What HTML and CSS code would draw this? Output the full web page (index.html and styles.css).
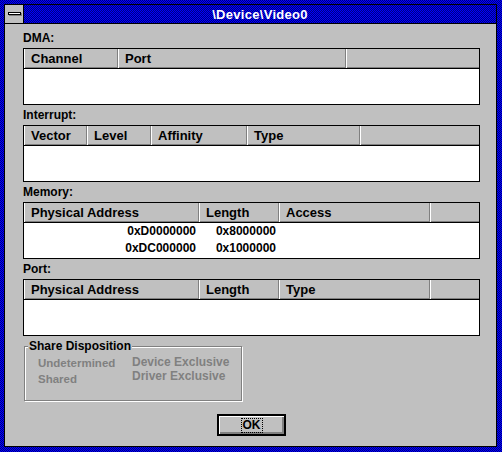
FILE: index.html
```html
<!DOCTYPE html>
<html>
<head>
<meta charset="utf-8">
<link rel="stylesheet" href="styles.css">
</head>
<body>
<div class="frame">
  <div class="window">
    <div class="titlebar">
      <div class="sysmenu">
        <svg width="18" height="18" viewBox="0 0 18 18" shape-rendering="crispEdges">
          <rect x="4" y="10" width="13" height="1" fill="#808080"/>
          <rect x="16" y="8" width="1" height="3" fill="#808080"/>
          <rect x="3.5" y="7.5" width="12" height="2" fill="#fff" stroke="#000"/>
        </svg>
      </div>
      <div class="title">\Device\Video0</div>
    </div>
    <div class="content">
      <div class="label">DMA:</div>
      <div class="list cols-dma">
        <div class="hdr"><div class="hc">Channel</div><div class="hc">Port</div><div class="hc"></div></div>
        <div class="body"></div>
      </div>

      <div class="label">Interrupt:</div>
      <div class="list cols-int">
        <div class="hdr"><div class="hc">Vector</div><div class="hc">Level</div><div class="hc">Affinity</div><div class="hc">Type</div><div class="hc"></div></div>
        <div class="body"></div>
      </div>

      <div class="label">Memory:</div>
      <div class="list cols-mem">
        <div class="hdr"><div class="hc">Physical Address</div><div class="hc">Length</div><div class="hc">Access</div><div class="hc"></div></div>
        <div class="body">
          <div class="row"><div class="cell num">0xD0000000</div><div class="cell num">0x8000000</div><div class="cell"></div><div class="cell"></div></div>
          <div class="row"><div class="cell num">0xDC000000</div><div class="cell num">0x1000000</div><div class="cell"></div><div class="cell"></div></div>
        </div>
      </div>

      <div class="label">Port:</div>
      <div class="list cols-mem">
        <div class="hdr"><div class="hc">Physical Address</div><div class="hc">Length</div><div class="hc">Type</div><div class="hc"></div></div>
        <div class="body"></div>
      </div>

      <div class="group">
        <div class="group-title">Share Disposition</div>
        <div class="group-items">
          <div class="gcol gcol1"><span>Undetermined</span><span>Shared</span></div>
          <div class="gcol gcol2"><span>Device Exclusive</span><span>Driver Exclusive</span></div>
        </div>
      </div>

      <div class="btnrow">
        <button class="btn"><span class="focus">OK</span></button>
      </div>
    </div>
  </div>
</div>
</body>
</html>
```
FILE: styles.css
```css
* { box-sizing: border-box; }
body {
  margin: 0;
  font-family: "Liberation Sans", Arial, sans-serif;
}
.frame {
  width: 502px;
  height: 452px;
  padding: 4px 5px 5px 4px;
  background: repeating-conic-gradient(#0000ff 0 25%, #000080 0 50%) 0 0 / 2px 2px;
}
.window {
  height: 100%;
  border: 1px solid #000;
  background: #c0c0c0;
  display: flex;
  flex-direction: column;
}
.titlebar {
  height: 19px;
  border-bottom: 1px solid #000;
  display: flex;
  flex: none;
}
.sysmenu {
  width: 19px;
  border-right: 1px solid #000;
  background: #c0c0c0;
  display: flex;
}
.title {
  flex: 1;
  background: repeating-conic-gradient(#0000ff 0 25%, #000080 0 50%) 0 0 / 2px 2px;
  color: #fff;
  font-weight: bold;
  font-size: 13px;
  letter-spacing: 0.3px;
  text-align: center;
  line-height: 19px;
}
.content {
  flex: 1;
  padding: 4px 16px 0 18px;
  display: flex;
  flex-direction: column;
}
.label {
  height: 20px;
  line-height: 20px;
  font-size: 12px;
  font-weight: bold;
  color: #000;
}
.list {
  height: 57px;
  flex: none;
  border: 1px solid #000;
  background: #fff;
  display: flex;
  flex-direction: column;
}
.hdr {
  display: grid;
  height: 20px;
  flex: none;
  background: #c0c0c0;
  border-bottom: 1px solid #000;
  box-shadow: inset 0 -1px 0 #808080;
}
.hc {
  border-left: 1px solid #fff;
  border-right: 1px solid #808080;
  padding: 1px 0 0 6px;
  font-size: 13px;
  font-weight: bold;
  line-height: 18px;
  white-space: nowrap;
  overflow: hidden;
  color: #000;
}
.hc:last-child { border-right: none; }
.body { flex: 1; }
.cols-dma .hdr { grid-template-columns: 94px 228px 1fr; }
.cols-int .hdr { grid-template-columns: 63px 64px 96px 113px 1fr; }
.cols-mem .hdr, .cols-mem .row { grid-template-columns: 175px 80px 151px 1fr; }
.row {
  display: grid;
  height: 17px;
  line-height: 17px;
  font-size: 12px;
  font-weight: bold;
  color: #000;
}
.cell.num { text-align: right; padding-right: 3px; }

.group {
  position: relative;
  margin: 10px 0 0 1px;
  width: 218px;
  height: 55px;
  flex: none;
  border: 1px solid #808080;
  box-shadow: inset 1px 1px 0 #fff, 1px 1px 0 #fff;
}
.group-title {
  position: absolute;
  top: -8px;
  left: 3px;
  background: #c0c0c0;
  padding: 0 1px;
  font-size: 12px;
  font-weight: bold;
  line-height: 14px;
  color: #000;
}
.group-items {
  display: flex;
  padding: 8px 0 0 13px;
}
.gcol {
  display: flex;
  flex-direction: column;
  width: 94px;
  line-height: 16px;
  font-size: 12px;
  font-weight: bold;
  color: #808080;
  white-space: nowrap;
}
.gcol1 { font-size: 11.5px; }
.gcol2 { line-height: 14px; }

.btnrow {
  display: flex;
  justify-content: center;
  margin-top: 13px;
}
.btn {
  width: 69px;
  height: 22px;
  border: 2px solid #000;
  background: #c0c0c0;
  box-shadow: inset 1px 1px 0 #fff, inset -2px -2px 0 #808080;
  padding: 0;
  font-family: "Liberation Sans", Arial, sans-serif;
  font-size: 12px;
  font-weight: bold;
  color: #000;
  display: flex;
  align-items: center;
  justify-content: center;
}
.focus {
  border: 1px dotted #000;
  padding: 0 1px;
  line-height: 13px;
}
```
